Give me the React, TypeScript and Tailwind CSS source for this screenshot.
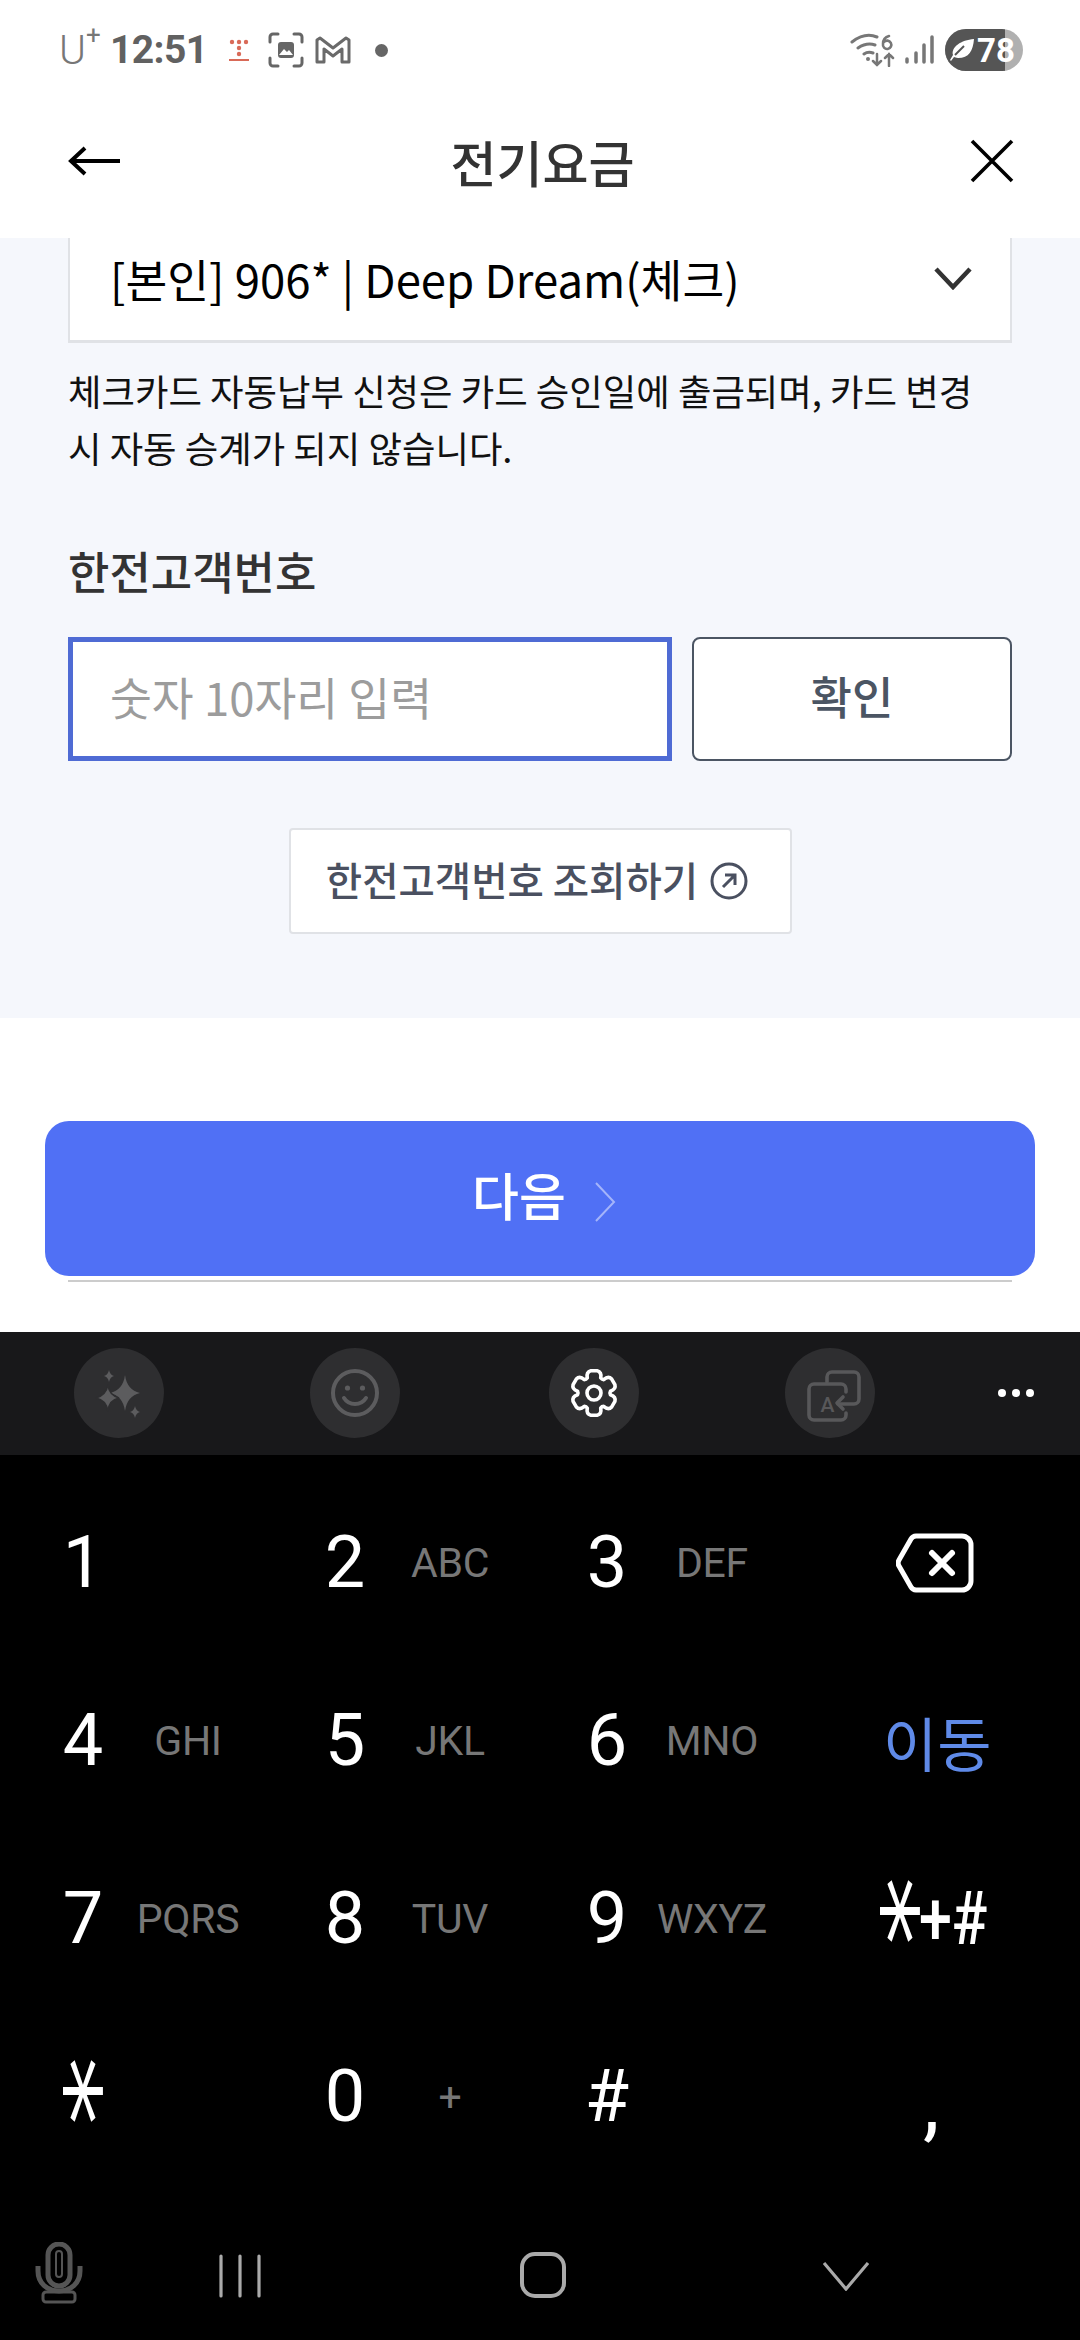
const KR = "font-['Noto_Sans_CJK_KR','Noto_Sans',sans-serif]";

function gearPath(cx: number, cy: number) {
  // six lobed keyboard gear, teeth up and down
  const pts: string[] = [];
  for (let i = 0; i < 6; i++) {
    const a = (Math.PI / 3) * i - Math.PI / 2;
    const p = (r: number, off: number) =>
      `${(cx + r * Math.cos(a + off)).toFixed(1)} ${(cy + r * Math.sin(a + off)).toFixed(1)}`;
    pts.push(`${i === 0 ? "M" : "L"}${p(16.5, -0.42)}`);
    pts.push(`Q${p(22.5, -0.36)} ${p(22.5, -0.14)}`);
    pts.push(`L${p(22.5, 0.14)}`);
    pts.push(`Q${p(22.5, 0.36)} ${p(16.5, 0.42)}`);
    pts.push(`Q${p(15.5, 0.52)} ${p(16.5, 0.62)}`);
  }
  return pts.join(" ") + " Z";
}

function StatusBar() {
  return (
    <div className="flex h-[100px] items-center bg-white pl-[59px] font-['Roboto',sans-serif] text-[#616161]">
      <span className="relative w-[51px] text-[41px] leading-none font-light text-[#777]">
        U<span className="absolute top-[-8px] left-[27px] text-[26px] font-normal">+</span>
      </span>
      <span className="w-[119px] text-[39px] leading-none font-bold tracking-[-0.6px]">12:51</span>
      <svg width="20" height="24" viewBox="0 0 20 24" className="mt-[2px]" fill="#d96a58">
        <circle cx="3" cy="3" r="2.2" />
        <circle cx="10" cy="3" r="2.2" />
        <circle cx="17" cy="3" r="2.2" />
        <circle cx="10" cy="9" r="2.2" />
        <circle cx="10" cy="15" r="2.2" />
        <rect x="0" y="20" width="20" height="2" />
      </svg>
      <svg width="36" height="36" viewBox="0 0 36 36" className="ml-[19px]" fill="none" stroke="#666" strokeWidth="3">
        <path d="M2 10V5a3 3 0 0 1 3-3h5M26 2h5a3 3 0 0 1 3 3v5M34 26v5a3 3 0 0 1-3 3h-5M10 34H5a3 3 0 0 1-3-3v-5" strokeLinecap="round" />
        <rect x="10" y="10" width="16" height="16" rx="3" fill="#666" stroke="none" />
        <path d="M11 23l5-6 3 3 2-2 4 5z" fill="#fff" stroke="none" />
      </svg>
      <svg width="36" height="28" viewBox="0 0 36 28" className="ml-[11px]" fill="none" stroke="#6a6a6a" strokeWidth="3" strokeLinejoin="round">
        <path d="M2 26V4l3-2 13 10L31 2l3 2v22h-7V13l-9 7-9-7v13z" />
      </svg>
      <span className="ml-[24px] h-[13px] w-[13px] rounded-full bg-[#666]" />
      <svg width="46" height="34" viewBox="0 0 46 34" className="ml-[462px]" fill="none" stroke="#777" strokeWidth="3" strokeLinecap="round">
        <path d="M2 9C11 2 20 1 27 4M8 15c6-4 11-5 17-3M14 21c3-2 6-2 9-1" />
        <circle cx="18" cy="26" r="2" fill="#777" stroke="none" />
        <path d="M39 3c-4 1-6 4-6 8a4.2 4.2 0 1 0 1-2" strokeWidth="2.6" />
        <path d="M27 21v11M23 28l4 4 4-4M39 33V21M35 25l4-4 4 4" strokeWidth="2.5" />
      </svg>
      <svg width="30" height="30" viewBox="0 0 30 30" className="ml-[8px]" fill="none" stroke="#777" strokeWidth="3.5" strokeLinecap="round">
        <path d="M3 24v3M12 18v9M20 10v17M28 2v25" />
      </svg>
      <div className="ml-[11px] flex h-[42px] w-[78px] items-center overflow-hidden rounded-full bg-[#b0b0b0]">
        <div className="flex h-full w-[60px] shrink-0 items-center bg-[#555]">
          <svg width="26" height="26" viewBox="0 0 26 26" className="ml-[4px] shrink-0" fill="#fff">
            <path d="M25 2C24 14 20 21 9 21c-2 0-3-1-4-1l-3 4-1-1 3-5C2 10 12 3 25 2z" />
            <path d="M6 18l9-9" stroke="#555" strokeWidth="2" />
          </svg>
        </div>
        <span className="ml-[-28px] text-[33px] leading-none font-bold text-white">78</span>
      </div>
    </div>
  );
}

function Header() {
  return (
    <div className="flex h-[138px] items-center justify-between bg-white pr-[66px] pb-[16px] pl-[67px]">
      <svg width="54" height="32" viewBox="0 0 54 32" fill="none" stroke="#000" strokeWidth="4">
        <path d="M53 16H4M18 3L4 16l14 13" />
      </svg>
      <span className={`${KR} ml-[-6px] text-[50px] leading-none font-medium text-[#333]`}>전기요금</span>
      <svg width="44" height="44" viewBox="0 0 44 44" fill="none" stroke="#000" strokeWidth="3.6">
        <path d="M2 2l40 40M42 2L2 42" />
      </svg>
    </div>
  );
}

function Form() {
  return (
    <div className={`${KR} h-[780px] bg-[#f5f7fc] px-[68px]`}>
      <div className="flex h-[105px] items-start justify-between border-x-2 border-b-[3px] border-[#e0e2e6] bg-white pt-[11px] pr-[38px] pl-[40px]">
        <span className="text-[45.5px] leading-[58px] text-black">[본인] 906* | Deep Dream(체크)</span>
        <svg width="38" height="24" viewBox="0 0 38 24" className="mt-[17px]" fill="none" stroke="#333" strokeWidth="4.5">
          <path d="M2 3l17 18L36 3" />
        </svg>
      </div>
      <p className="mt-[19px] text-[36.4px] leading-[57px] text-[#111]">
        체크카드 자동납부 신청은 카드 승인일에 출금되며, 카드 변경
        <br />시 자동 승계가 되지 않습니다.
      </p>
      <h2 className="mt-[65px] h-[60px] text-[45px] leading-[60px] font-medium text-[#333]">한전고객번호</h2>
      <div className="mt-[36px] flex gap-[20px]">
        <input
          readOnly
          placeholder="숫자 10자리 입력"
          className="h-[124px] w-[604px] border-[5px] border-[#4f6bd4] bg-white pb-[6px] pl-[37px] text-[45.5px] outline-none placeholder:text-[#9c9c9c]"
        />
        <button className="h-[124px] w-[320px] rounded-[8px] border-2 border-[#4b5563] bg-white pb-[6px] text-[45px] font-medium text-[#4b5563]">
          확인
        </button>
      </div>
      <div className="mt-[67px] flex justify-center">
        <button className="flex h-[106px] w-[503px] items-center justify-center gap-[12px] rounded-[4px] border-2 border-[#e0e2e6] bg-white pr-[6px] pb-[4px] text-[39.5px] font-medium text-[#4a5060]">
          한전고객번호 조회하기
          <svg width="38" height="38" viewBox="0 0 38 38" className="mt-[4px]" fill="none" stroke="#4a5060" strokeWidth="3">
            <circle cx="19" cy="19" r="17" />
            <path d="M13 25l12-12M15 13h10v10" />
          </svg>
        </button>
      </div>
    </div>
  );
}

function NextButton() {
  return (
    <div className={`${KR} h-[314px] bg-white pt-[103px]`}>
      <button className="mx-[45px] flex h-[155px] w-[990px] items-center justify-center gap-[28px] rounded-[24px] bg-[#5070f5] pb-[8px] pl-[8px] text-[51px] font-medium text-white">
        다음
        <svg width="22" height="40" viewBox="0 0 22 40" className="mt-[14px]" fill="none" stroke="#a4b4fa" strokeWidth="2">
          <path d="M2 1l18 19L2 39" />
        </svg>
      </button>
      <div className="mx-[68px] mt-[4px] h-[2px] bg-[#cccccc]" />
    </div>
  );
}

function Circle({ children }: { children: React.ReactNode }) {
  return (
    <div className="flex h-[90px] w-[90px] shrink-0 items-center justify-center rounded-full bg-[#2e2e30]">
      {children}
    </div>
  );
}

function Toolbar() {
  return (
    <div className="flex h-[123px] items-center bg-[#18181a] pb-[2px] pl-[74px]">
      <Circle>
        <svg width="90" height="90" viewBox="0 0 90 90" fill="#5c5c5e">
          <path d="M51 27Q53 42 66 45Q53 48 51 63Q49 48 36 45Q49 42 51 27Z" />
          <path d="M34 37Q35 47 45 50Q35 52 34 63Q32 52 22 50Q32 47 34 37Z" stroke="#2e2e30" strokeWidth="1.5" />
          <path d="M35 22Q36 27 40 28Q36 29 35 34Q34 29 30 28Q34 27 35 22Z" />
          <path d="M61 58Q62 63 66 64Q62 65 61 70Q60 65 56 64Q60 63 61 58Z" />
        </svg>
      </Circle>
      <div className="ml-[146px]">
        <Circle>
          <svg width="90" height="90" viewBox="0 0 90 90" fill="none" stroke="#5c5c5e" strokeWidth="4" strokeLinecap="round">
            <circle cx="45" cy="45" r="22" />
            <path d="M34 50c5 8 17 8 22 0" />
            <circle cx="37.5" cy="40" r="2.6" fill="#5c5c5e" stroke="none" />
            <circle cx="52.5" cy="40" r="2.6" fill="#5c5c5e" stroke="none" />
          </svg>
        </Circle>
      </div>
      <div className="ml-[149px]">
        <Circle>
          <svg width="90" height="90" viewBox="0 0 90 90" fill="none" stroke="#fff" strokeWidth="3.6" strokeLinejoin="round">
            <path d={gearPath(45, 45)} />
            <circle cx="45" cy="45" r="7" />
          </svg>
        </Circle>
      </div>
      <div className="ml-[146px]">
        <Circle>
          <svg width="90" height="90" viewBox="0 0 90 90" fill="none" stroke="#58585a" strokeWidth="3.6" strokeLinecap="round" strokeLinejoin="round">
            <path d="M42 34v-5a5 5 0 0 1 5-5h22a5 5 0 0 1 5 5v22a5 5 0 0 1-5 5H53" />
            <path d="M61 44v-3a5 5 0 0 0-5-5H29a5 5 0 0 0-5 5v26a5 5 0 0 0 5 5h27a5 5 0 0 0 5-5v-2" />
            <path d="M58 49l-6 6 6 6" />
            <text x="42.5" y="64" textAnchor="middle" fontSize="21" fontWeight="500" fontFamily="Roboto" fill="#58585a" stroke="none">A</text>
          </svg>
        </Circle>
      </div>
      <div className="ml-[123px] flex gap-[6px]">
        <span className="h-[8px] w-[8px] rounded-full bg-white" />
        <span className="h-[8px] w-[8px] rounded-full bg-white" />
        <span className="h-[8px] w-[8px] rounded-full bg-white" />
      </div>
    </div>
  );
}

function Key({ digit, letters }: { digit: React.ReactNode; letters?: string }) {
  return (
    <div className="flex items-center">
      <span className="ml-[33px] w-[100px] text-center text-[72px] leading-none font-normal text-white">{digit}</span>
      <span className="w-[110px] text-center text-[41px] leading-none tracking-[-0.3px] whitespace-nowrap text-[#777]">{letters}</span>
    </div>
  );
}

// rotated so a bar lies flat, as on the samsung pad
function Star() {
  return (
    <span className="inline-block origin-center translate-x-[-16px] translate-y-[-13px] scale-x-[2.8] scale-y-[1.75] rotate-90 font-['DejaVu_Sans',sans-serif] text-[50px] leading-none font-normal">
      *
    </span>
  );
}

function Keypad() {
  return (
    <div className="grid h-[731px] grid-cols-[262px_262px_262px_1fr] grid-rows-[178px_178px_178px_178px] bg-black pt-[19px] font-['Roboto',sans-serif]">
      <Key digit="1" />
      <Key digit="2" letters="ABC" />
      <Key digit="3" letters="DEF" />
      <div className="flex items-center">
        <svg width="78" height="60" viewBox="0 0 78 60" className="ml-[110px]" fill="none" stroke="#fff" strokeWidth="5" strokeLinejoin="round">
          <path d="M20 3h46a9 9 0 0 1 9 9v36a9 9 0 0 1-9 9H20a6 6 0 0 1-5-3L3 33a6 6 0 0 1 0-6L15 6a6 6 0 0 1 5-3z" />
          <path d="M36 20l20 20M56 20L36 40" strokeWidth="6" strokeLinecap="round" />
        </svg>
      </div>

      <Key digit="4" letters="GHI" />
      <Key digit="5" letters="JKL" />
      <Key digit="6" letters="MNO" />
      <div className={`${KR} flex items-center pl-[97px] text-[59px] leading-none text-[#5f8ae8]`}>이동</div>

      <Key digit="7" letters="PQRS" />
      <Key digit="8" letters="TUV" />
      <Key digit="9" letters="WXYZ" />
      <div className="flex items-center pl-[102px] leading-none text-white">
        <span className="mt-[10px]">
          <Star />
        </span>
        <span className="ml-[6px] inline-block origin-left scale-x-[0.8] text-[74px] font-medium whitespace-nowrap">+#</span>
      </div>

      <Key digit={<Star />} />
      <Key digit="0" letters="+" />
      <Key digit="#" />
      <div className="flex items-center pl-[137px] text-[84px] leading-none text-white">
        <span className="mt-[12px]">,</span>
      </div>
    </div>
  );
}

function NavBar() {
  return (
    <div className="flex h-[154px] items-start bg-black pt-[56px] pl-[35px]">
      <svg width="48" height="62" viewBox="0 0 48 62" fill="none" stroke="#555" strokeWidth="3">
        <rect x="13" y="2" width="22" height="42" rx="11" strokeWidth="5" />
        <rect x="21" y="9" width="6" height="26" rx="3" strokeWidth="2" />
        <path d="M3 24v5c0 12 9 20 21 20s21-8 21-20v-5" strokeWidth="5" />
        <rect x="8" y="50" width="32" height="10" rx="3" />
      </svg>
      <svg width="42" height="44" viewBox="0 0 42 44" className="mt-[12px] ml-[136px]" stroke="#aaa" strokeWidth="3.2" strokeLinecap="round">
        <path d="M2 2v40M21 2v40M40 2v40" />
      </svg>
      <svg width="46" height="46" viewBox="0 0 46 46" className="mt-[10px] ml-[259px]" fill="none" stroke="#aaa" strokeWidth="4">
        <rect x="2" y="2" width="42" height="42" rx="13" />
      </svg>
      <svg width="46" height="30" viewBox="0 0 46 30" className="mt-[19px] ml-[257px]" fill="none" stroke="#aaa" strokeWidth="3.2">
        <path d="M1 2l22 26L45 2" />
      </svg>
    </div>
  );
}

export default function App() {
  return (
    <div className="h-[2340px] w-[1080px] overflow-hidden">
      <StatusBar />
      <Header />
      <Form />
      <NextButton />
      <Toolbar />
      <Keypad />
      <NavBar />
    </div>
  );
}
